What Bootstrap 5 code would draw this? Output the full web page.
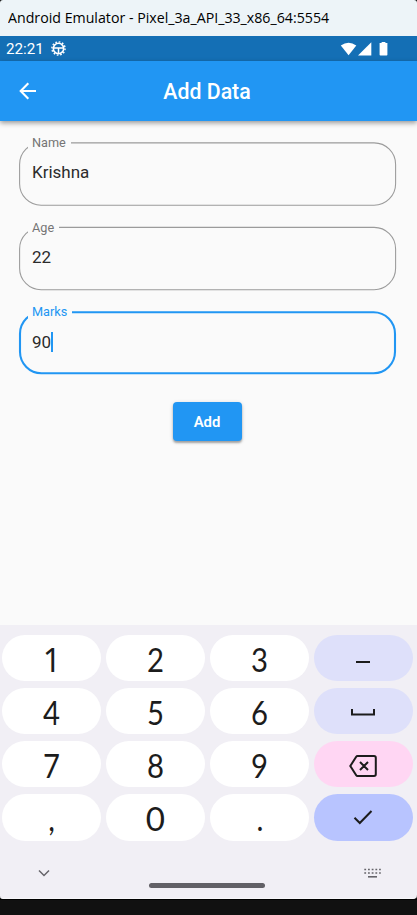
<!DOCTYPE html>
<html lang="en">
<head>
<meta charset="utf-8">
<meta name="viewport" content="width=device-width, initial-scale=1">
<title>Add Data</title>
<link href="https://cdn.jsdelivr.net/npm/bootstrap@5.3.0/dist/css/bootstrap.min.css" rel="stylesheet">
<style>
body{background:#111;font-family:Roboto,sans-serif;width:417px;height:915px;overflow:hidden}
svg{display:block;flex:none}
.window-title{height:36px;background:#edf4f8;border-radius:3px 3px 0 0;font:14.5px/35px "Open Sans","Noto Sans",sans-serif;color:#000;padding-left:8px}
.window-title span{display:inline-block;white-space:nowrap;transform-origin:0 50%}
.status{height:25px;background:#146fb5;color:#fff;font-size:15.2px;line-height:25px;padding-left:6px}
.status span{padding-top:1px}
.status-gear{margin-left:7px}
.status-icons{margin-right:28.500px}
.appbar{height:60px;background:#2196f3;color:#fff;box-shadow:0 2px 5px rgba(0,0,0,.4);position:relative;z-index:1}
.appbar h1{font-size:21.3px;font-weight:500;line-height:60px;left:0;right:3px;top:1px}
.back{margin-left:19px}
.page{height:504px;background:#fafafa;padding:21px 20px 0}
.field{height:62px;margin-bottom:22.6px;color:#2b2b2b;font-size:17px;line-height:24px;padding:18.400px 12px 0}
.field svg{left:-2px;top:-2px;overflow:visible}
.field label{left:8px;top:-7px;height:16px;padding:0 5px 0 4px;background:#fafafa;color:#757575;font-size:12.7px;line-height:16px}
.field.active label{color:#2196f3}
.caret{width:2px;height:20px;background:#2196f3}
.btn-add{width:69px;height:39px;background:#2196f3!important;color:#fff!important;border:0;border-radius:4px;font-size:14.9px;font-weight:600;line-height:39px;padding:1px 1px 0 0;margin:6px 2px 0 0;box-shadow:0 2px 2px rgba(0,0,0,.28),0 1px 4px rgba(0,0,0,.16)}
.keyboard{height:274px;background:#f1eff5;border-radius:0 0 4px 3px;padding:9.7px 4px 0 2.3px;border-bottom:1px solid #f7f6f9}
.keys{display:grid;grid-template-columns:repeat(4,99.2px);column-gap:4.7px;row-gap:6.5px;grid-auto-rows:46.6px}
.key{background:#fff;border-radius:24px;display:flex;align-items:center;justify-content:center;font:32.500px/46px Lato,sans-serif;color:#1c1c1c;padding-top:4px}
.key span{display:block;transform:scaleX(.9)}
.key .zero{transform:scaleX(1.02)}
.key.alt{background:#dee0fa;padding:1px 1px 0 0}
.key.del{background:#ffd6f3;padding:3px 1px 0 0}
.key.ok{background:#b8c4ff;padding:0 1px 0 0}
.key .one{font-family:"Noto Sans",sans-serif;font-size:32px;transform:none}
.nav-row{height:54px;padding:24px 32px 0 36px}
.home{width:116px;height:4.5px;border-radius:3px;background:#626066;margin-top:18.5px}
.bezel{height:16px;background:#111;border-top:1px solid #000}
</style>
</head>
<body>
<div class="window-title"><span id="wt">Android Emulator - Pixel_3a_API_33_x86_64:5554</span></div>
<div class="status d-flex align-items-center">
  <span>22:21</span>
  <svg class="status-gear" width="15" height="15" viewBox="0 0 15 15" fill="none" stroke="#fff"><circle cx="7.5" cy="7.5" r="5.2" stroke-width="1.600"/><circle cx="7.5" cy="7.5" r="6.600" stroke-width="1.400" stroke-dasharray="1.700 1.756"/><path d="M2.500 7h10M7.500 7v5.500" stroke-width="1.500"/></svg>
  <svg class="status-icons ms-auto" width="49" height="16" viewBox="0 0 49 16" fill="#fff"><path d="M.8 4.600Q8.600-1.200 16.300 4.600L8.600 14.200Z"/><path d="M31.300 1.200V14.500H18Z"/><path d="M39.600 2h2V1h3.800v1h2v11.800q0 .8-.8.800h-6.200q-.8 0-.8-.8z"/></svg>
</div>
<header class="appbar d-flex align-items-center">
  <svg class="back" width="18" height="18" viewBox="0 0 18 18" fill="none" stroke="#fff" stroke-width="2.1"><path d="M17 9H2M9.300 1.300L1.700 9l7.600 7.700"/></svg>
  <h1 class="position-absolute text-center m-0">Add Data</h1>
</header>
<main class="page">
  <div class="field position-relative">
    <svg class="position-absolute" width="380" height="66"><rect x="1.600" y="2.900" width="376" height="62.300" rx="21.500" fill="none" stroke="#9b9b9b" stroke-width="1.060"/></svg>
    <label class="position-absolute">Name</label><div>Krishna</div>
  </div>
  <div class="field position-relative">
    <svg class="position-absolute" width="380" height="66"><rect x="1.600" y="2.400" width="376" height="62.300" rx="21.500" fill="none" stroke="#9b9b9b" stroke-width="1.060"/></svg>
    <label class="position-absolute">Age</label><div>22</div>
  </div>
  <div class="field active position-relative">
    <svg class="position-absolute" width="380" height="66"><rect x="2" y="3.300" width="375" height="61" rx="21.500" fill="none" stroke="#2196f3" stroke-width="2.100"/></svg>
    <label class="position-absolute">Marks</label><div class="d-flex align-items-center">90<span class="caret"></span></div>
  </div>
  <div class="d-flex justify-content-center"><button class="btn btn-primary btn-add" type="button">Add</button></div>
</main>
<section class="keyboard">
  <div class="keys">
    <div class="key"><span class="one">1</span></div><div class="key"><span>2</span></div><div class="key"><span>3</span></div>
    <div class="key alt"><svg width="14" height="14" viewBox="0 0 14 14"><path d="M0 11h14" stroke="#1c1c1c" stroke-width="2"/></svg></div>
    <div class="key"><span>4</span></div><div class="key"><span>5</span></div><div class="key"><span>6</span></div>
    <div class="key alt"><svg width="24" height="8" viewBox="0 0 24 8"><path d="M1 1v5.500h22V1" fill="none" stroke="#1c1c1c" stroke-width="2"/></svg></div>
    <div class="key"><span>7</span></div><div class="key"><span>8</span></div><div class="key"><span>9</span></div>
    <div class="key del"><svg width="28" height="22" viewBox="0 0 28 22" fill="none" stroke="#1c1c1c" stroke-width="2"><path d="M8.500 1H25q1.800 0 1.800 1.800v16.400q0 1.800-1.800 1.800H8.500q-.8 0-1.300-.8L1.300 11l5.900-9.200q.5-.8 1.300-.8zM11 7l8 8M19 7l-8 8"/></svg></div>
    <div class="key"><span>,</span></div><div class="key"><span class="zero">0</span></div><div class="key"><span>.</span></div>
    <div class="key ok"><svg width="20" height="16" viewBox="0 0 20 16"><path d="M1.500 8.800l5.300 5.200L18.500 2" fill="none" stroke="#1c1c1c" stroke-width="2"/></svg></div>
  </div>
  <div class="nav-row d-flex justify-content-between align-items-start">
    <svg width="12" height="16" viewBox="0 0 12 16"><path d="M1 5.500l5 5 5-5" fill="none" stroke="#66646a" stroke-width="1.500"/></svg>
    <div class="home"></div>
    <svg width="17" height="16" viewBox="0 0 17 16" stroke="#66646a" stroke-width="1.600"><path d="M.3 4.500h16.500M.3 8h16.500" stroke-dasharray="1.800 1.900"/><path d="M4 11.800h9"/></svg>
  </div>
</section>
<div class="bezel"></div>
<script src="https://cdn.jsdelivr.net/npm/bootstrap@5.3.0/dist/js/bootstrap.bundle.min.js"></script>
<script>
// Fit the window caption to its fixed width.
const caption = document.getElementById('wt');
document.fonts.ready.then(() => { caption.style.transform = 'scaleX(' + 321 / caption.offsetWidth + ')'; });
</script>
</body>
</html>
